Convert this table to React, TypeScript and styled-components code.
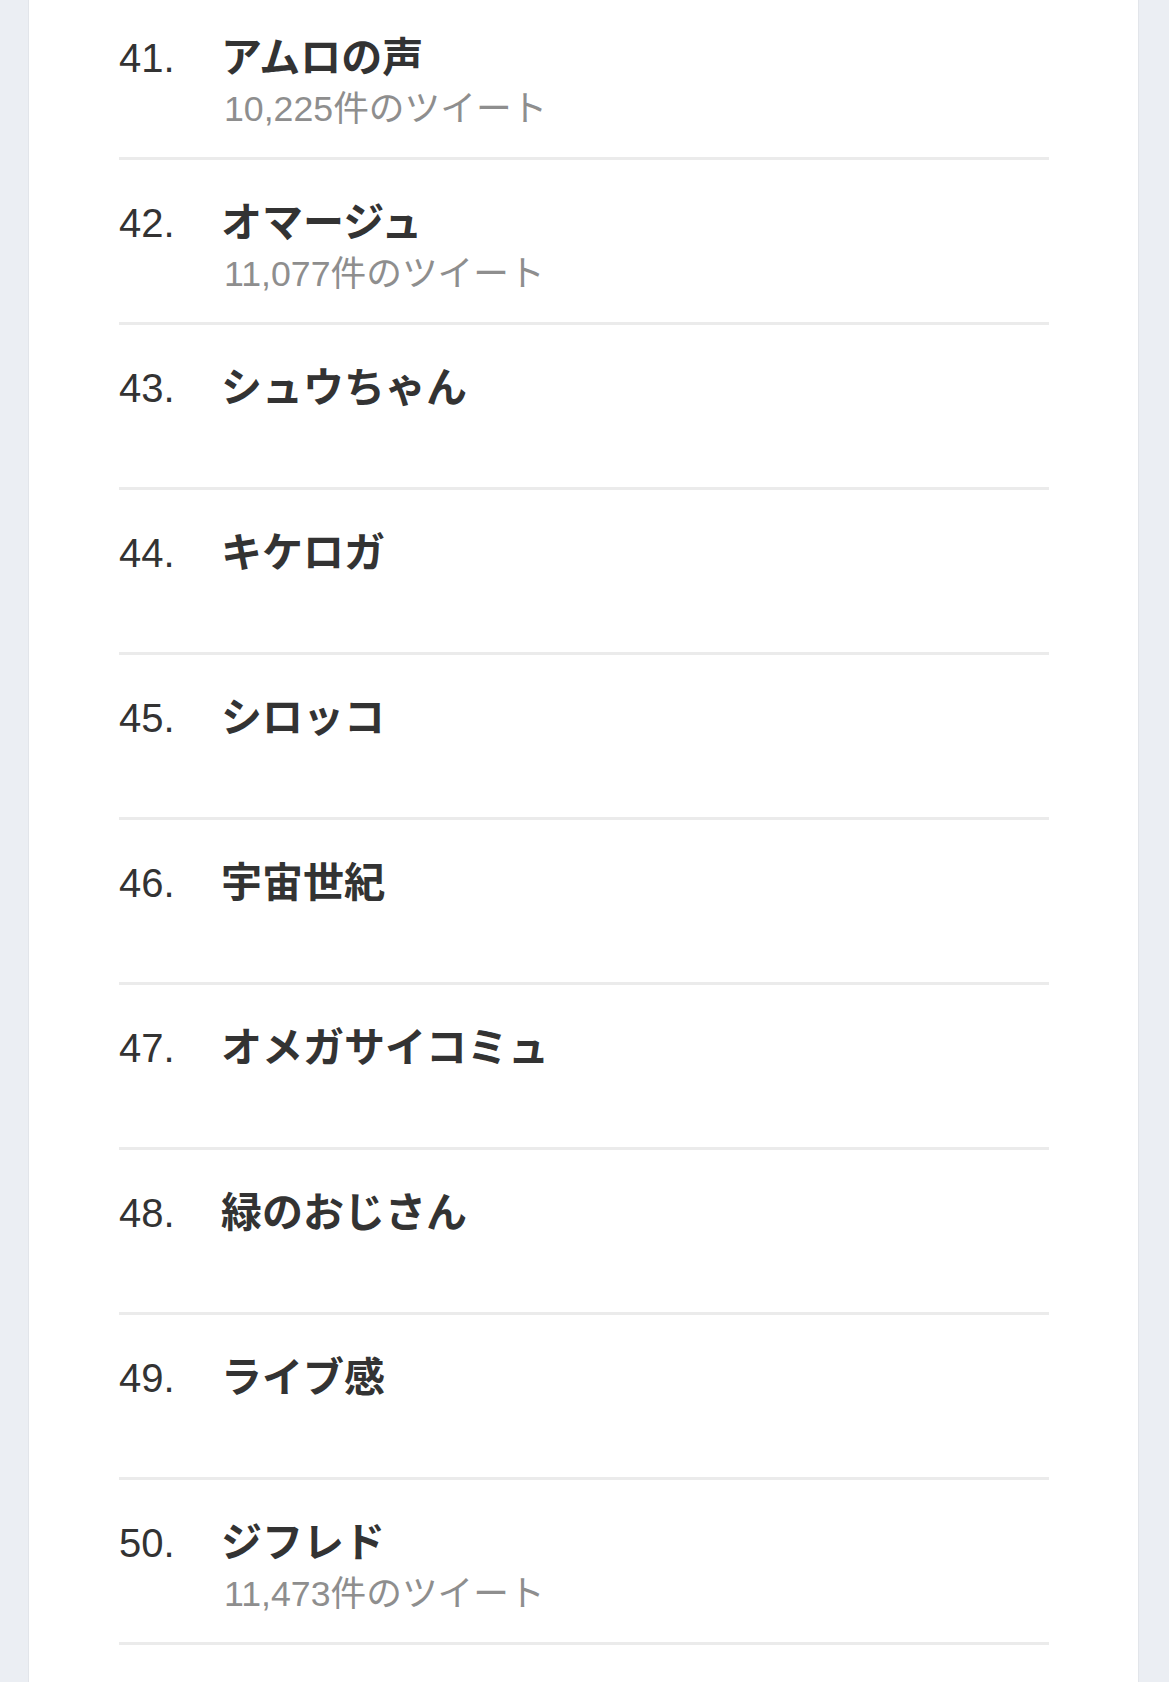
import React from "react";
import styled, { createGlobalStyle } from "styled-components";

const GlobalStyle = createGlobalStyle`
  html, body {
    margin: 0;
    padding: 0;
    background: #ebeef3;
  }
  body {
    font-family: "Liberation Sans", "Noto Sans CJK JP", sans-serif;
    color: #333333;
  }
`;

interface Trend {
  rank: number;
  name: string;
  tweets?: string;
}

const trender: Trend[] = [
  { rank: 41, name: "アムロの声", tweets: "10,225" },
  { rank: 42, name: "オマージュ", tweets: "11,077" },
  { rank: 43, name: "シュウちゃん" },
  { rank: 44, name: "キケロガ" },
  { rank: 45, name: "シロッコ" },
  { rank: 46, name: "宇宙世紀" },
  { rank: 47, name: "オメガサイコミュ" },
  { rank: 48, name: "緑のおじさん" },
  { rank: 49, name: "ライブ感" },
  { rank: 50, name: "ジフレド", tweets: "11,473" },
];

const Page = styled.div`
  display: flex;
  justify-content: flex-start;
  min-height: 1682px;
  padding-left: 28px;
  padding-right: 30px;
  box-sizing: border-box;
  overflow: hidden;
`;

const Kort = styled.div`
  flex: 1;
  background: #ffffff;
  border-left: 1px solid #e2e5ea;
  border-right: 1px solid #e2e5ea;
  padding: 0 89px 0 90px;
`;

const Liste = styled.ol`
  list-style: none;
  margin: -5px 0 0 0;
  padding: 0;
`;

const Rad = styled.li`
  display: flex;
  align-items: baseline;
  height: 162px;
  box-sizing: content-box;
  border-bottom: 3px solid #ebebeb;
`;

const Innhold = styled.div`
  display: flex;
  align-items: baseline;
  padding-top: 33px;
`;

const Nummer = styled.span`
  width: 102px;
  flex-shrink: 0;
  font-family: "Liberation Sans", sans-serif;
  font-size: 40px;
  line-height: 52px;
  color: #333333;
`;

const Tekster = styled.div`
  display: flex;
  flex-direction: column;
`;

const Tittel = styled.span`
  font-family: "Noto Sans CJK JP", sans-serif;
  font-weight: 700;
  font-size: 41px;
  line-height: 52px;
  color: #333333;
`;

const Undertittel = styled.span`
  padding-left: 3px;
  font-family: "Liberation Sans", "Noto Sans CJK JP", sans-serif;
  font-size: 35.7px;
  line-height: 58px;
  color: #8e8e8e;
`;

const App = () => (
  <>
    <GlobalStyle />
    <Page>
      <Kort>
        <Liste>
          {trender.map((trend) => (
            <Rad key={trend.rank}>
              <Innhold>
                <Nummer>{`${trend.rank}.`}</Nummer>
                <Tekster>
                  <Tittel>{trend.name}</Tittel>
                  {trend.tweets && (
                    <Undertittel>{`${trend.tweets}件のツイート`}</Undertittel>
                  )}
                </Tekster>
              </Innhold>
            </Rad>
          ))}
        </Liste>
      </Kort>
    </Page>
  </>
);

export default App;
